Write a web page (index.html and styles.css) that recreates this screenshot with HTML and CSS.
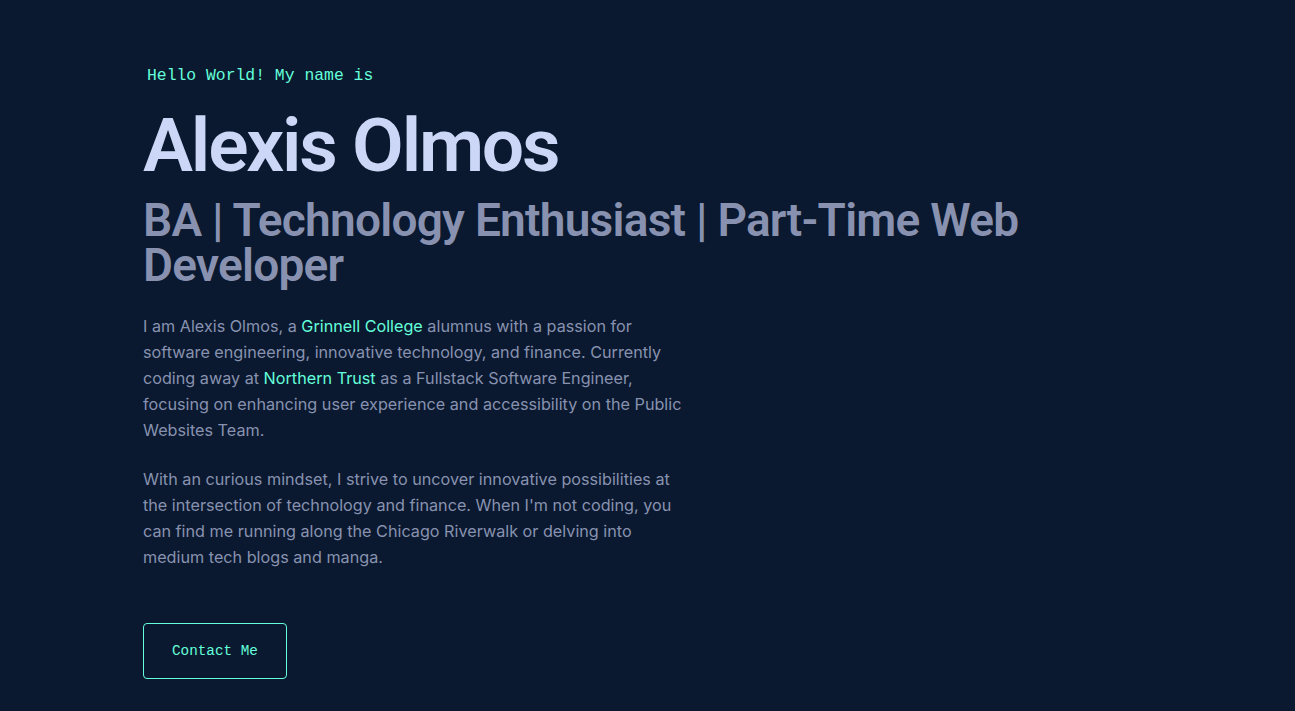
FILE: index.html
```html
<!DOCTYPE html>
<html lang="en">
<head>
<meta charset="utf-8">
<title>Alexis Olmos</title>
<link rel="stylesheet" href="styles.css">
</head>
<body>
<main class="hero">
  <p class="hello">Hello World! My name is</p>
  <h1 class="name">Alexis Olmos</h1>
  <h2 class="tagline">BA | Technology Enthusiast | Part-Time Web Developer</h2>
  <div class="about">
    <p class="text">I am Alexis Olmos, a <a class="link" href="#">Grinnell College</a> alumnus with a passion for software engineering, innovative technology, and finance. Currently coding away at <a class="link" href="#">Northern Trust</a> as a Fullstack Software Engineer, focusing on enhancing user experience and accessibility on the Public Websites Team.</p>
    <p class="text second">With an curious mindset, I strive to uncover innovative possibilities at the intersection of technology and finance. When I'm not coding, you can find me running along the Chicago Riverwalk or delving into medium tech blogs and manga.</p>
  </div>
  <a class="contact" href="#">Contact Me</a>
</main>
</body>
</html>
```

FILE: styles.css
```css
html, body {
  margin: 0;
  padding: 0;
  background: #0a192f;
}
body {
  font-family: "Inter", "Roboto", sans-serif;
  color: #8892b0;
  min-height: 711px;
}
.hero {
  display: flex;
  flex-direction: column;
  align-items: flex-start;
  padding: 66px 143px 0 143px;
}
.hello {
  margin: 0 0 0 4px;
  font-family: "Liberation Mono", "DejaVu Sans Mono", monospace;
  font-size: 16.4px;
  line-height: 20px;
  color: #64ffda;
}
.name {
  margin: 19px 0 0 0;
  font-family: "Roboto", "Inter", sans-serif;
  font-size: 75px;
  line-height: 80px;
  font-weight: 600;
  color: #ccd6f6;
  letter-spacing: -2.2px;
}
.tagline {
  margin: 13px 0 0 0;
  font-family: "Roboto", "Inter", sans-serif;
  font-size: 46px;
  line-height: 45px;
  font-weight: 600;
  color: #8892b0;
  max-width: 920px;
  letter-spacing: -0.75px;
}
.about {
  margin-top: 25px;
  max-width: 545px;
}
.text {
  margin: 0;
  font-size: 16.2px;
  line-height: 26px;
  color: #8892b0;
}
.second {
  margin-top: 23px;
}
.link {
  color: #64ffda;
  text-decoration: none;
}
.contact {
  margin-top: 53px;
  display: inline-block;
  border: 1px solid #64ffda;
  border-radius: 4px;
  padding: 19px 28px;
  font-family: "Liberation Mono", "DejaVu Sans Mono", monospace;
  font-size: 14.3px;
  line-height: 16px;
  color: #64ffda;
  text-decoration: none;
}
```
